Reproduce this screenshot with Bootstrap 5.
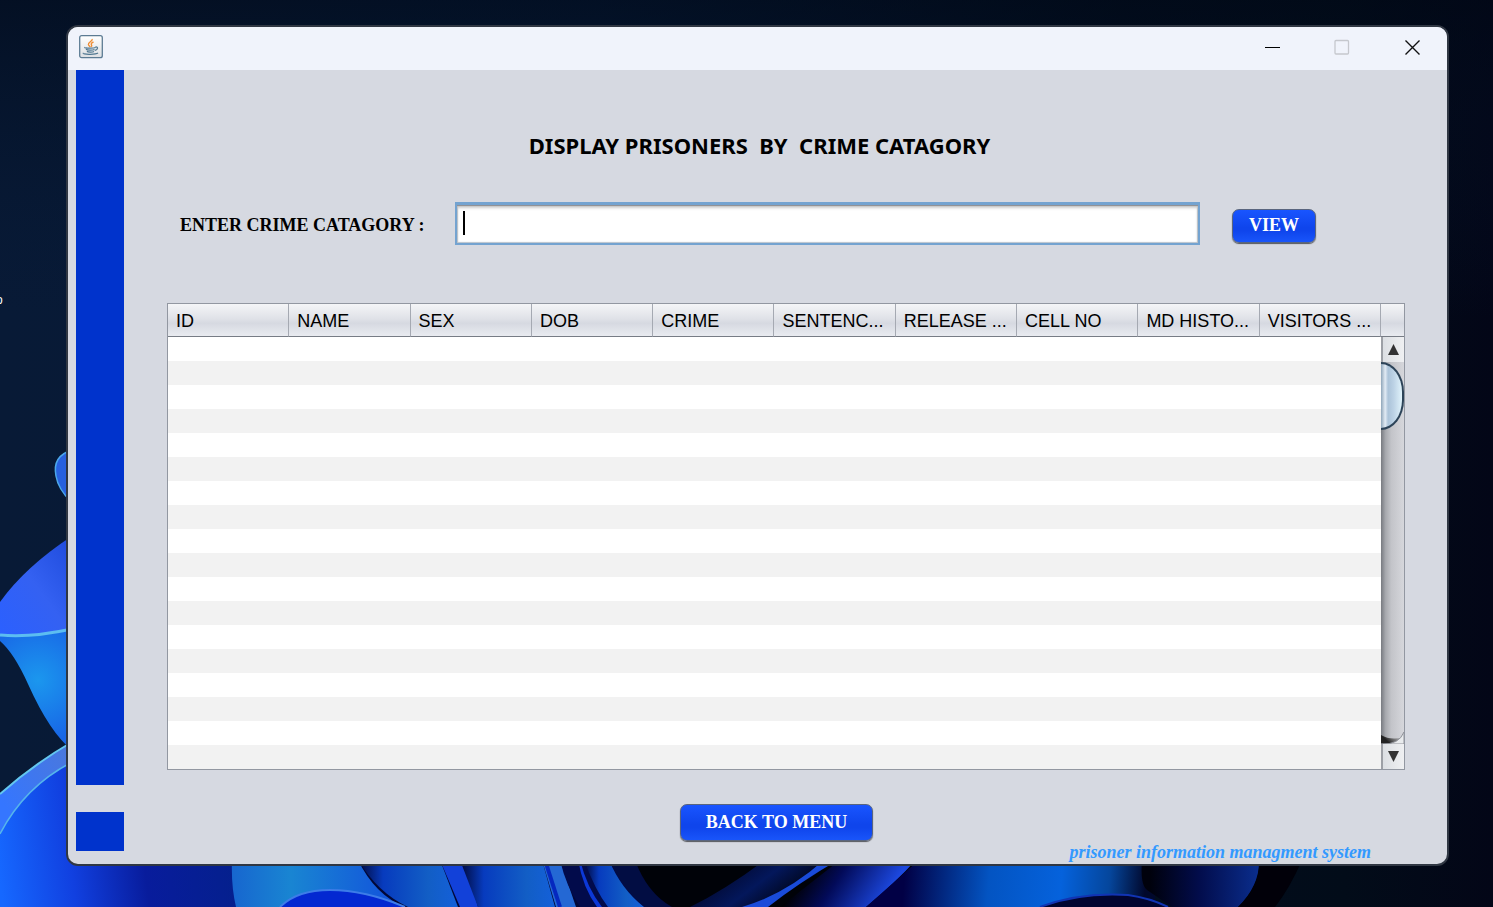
<!DOCTYPE html>
<html lang="en">
<head>
<meta charset="utf-8">
<meta name="viewport" content="width=device-width, initial-scale=1">
<title>Prisoner Information System</title>
<link href="https://cdn.jsdelivr.net/npm/bootstrap@5.3.0/dist/css/bootstrap.min.css" rel="stylesheet">
<style>
  body { background: #04101f; font-family: "Liberation Sans", Arial, sans-serif; }
  .desktop { padding: 25px 44px 41px 66px; }
  .wallpaper { z-index: 0; }
  .shortcut-text { left: -4px; top: 292px; font-size: 12px; line-height: 16px; }
  .app-window { z-index: 1; border: 2px solid #303743; border-radius: 12px; background: #d6d9e1; }
  .title-strip { height: 43px; background: #f0f3fb; padding-left: 11px; }
  .win-btn { width: 70px; height: 40px; padding: 0; border: 0; background: none; display: flex; align-items: center; justify-content: center; }
  .side { width: 56px; padding: 0 0 13px 8px; gap: 27px; }
  .side-bar { background: #0033cc; }
  .side-foot { height: 39px; }
  .main-area { padding: 60px 42px 0 43px; min-width: 0; }
  .page-title { font: bold 22px/30px "Noto Sans", sans-serif; white-space: pre-wrap; color: #000; padding-right: 53px; margin: 0 0 42px; text-align: center; }
  .search-row { padding: 0 89px 0 13px; margin-bottom: 58px; }
  .search-label { width: 275px; padding-top: 2px; font: bold 18px/24px "Liberation Serif", serif; color: #000; }
  .search-box { height: 43px; border: 2px solid #74a3d0; border-top-width: 3px; border-radius: 0; box-shadow: inset 0 1px 1px #8c8c90, inset 0 3px 3px #ccc, inset 0 0 1px 1px #b8c2cc; }
  .search-box:focus { border-color: #74a3d0; box-shadow: inset 0 1px 1px #8c8c90, inset 0 3px 3px #ccc; }
  .text-caret { left: 8px; top: 9px; width: 2px; height: 24px; background: #000; }
  .btn-royal { font: bold 18px/24px "Liberation Serif", serif; color: #fff; padding: 0 0 2px; border: 1px solid #59657f; border-radius: 7px; background: linear-gradient(#1955ff, #0f45ec 55%, #0f45ec 65%, #1955fa); box-shadow: 0 1px 1px #55575c; }
  .btn-royal:hover { color: #fff; background: #1955ff; }
  .btn-view { width: 84px; height: 34px; margin: 4px 0 0 32px; }
  .btn-menu { width: 193px; height: 37px; margin-bottom: 1px; }
  .grid-box { border: 1px solid #9297a1; background: #fff; }
  .head-fill, .grid-table th { height: 33px; border-bottom: 1px solid #777c85; background: linear-gradient(#f4f5f7, #e0e2e8 45%, #d6d9e1 60%, #e9ebf0); }
  .grid-table { table-layout: fixed; width: 100%; border-collapse: separate; border-spacing: 0; }
  .grid-table th { font-weight: 400; font-size: 18px; line-height: 24px; color: #000; padding: 1px 0 0 8px; border-right: 1px solid #a5a9b2; white-space: nowrap; overflow: hidden; }
  .grid-table td { height: 24px; padding: 0; }
  .grid-table tbody tr:nth-child(even) { background: #f2f2f2; }
  .scroll-col { width: 23px; }
  .scroll-track { background: linear-gradient(90deg, #777a80, #a7a9ae 20%, #c3c4c9 45%, #cfd0d5 80%, #d6d7dc); }
  .scroll-thumb { height: 68px; border: 2px solid #2c4358; border-left: 0; border-radius: 0 23px 23px 0 / 0 30px 30px 0; background: linear-gradient(90deg, #8ea5b9, #e2ebf4 20%, #abc3d9 34%, #bcd2e5 60%, #e0f3fb); }
  .arrow-btn { height: 25px; padding: 0; border: 0; border-left: 2px solid #9da0a6; background: linear-gradient(90deg, #dcdfe3, #eff0f2); line-height: 0; }
  .track-end { height: 12px; }
  .btn-line { margin-top: 34px; padding-right: 19px; }
  .system-name { font: italic bold 18px/20px "Liberation Serif", serif; color: #3399ff; padding-right: 34px; }
</style>
</head>
<body>
<div class="desktop position-relative min-vh-100 d-flex overflow-hidden">
  <svg class="wallpaper position-absolute top-0 start-0 w-100 h-100" viewBox="0 0 1493 907" preserveAspectRatio="xMidYMid slice" aria-hidden="true">
    <defs>
      <linearGradient id="night" x1="0" x2="1"><stop offset="0" stop-color="#081a36"/><stop offset=".4" stop-color="#051a38"/><stop offset=".75" stop-color="#020d1e"/><stop offset=".9" stop-color="#020c19"/><stop offset="1" stop-color="#030617"/></linearGradient>
      <linearGradient id="shade" x1="0" x2="0" y1="0" y2="1"><stop offset="0" stop-color="#010917" stop-opacity=".6"/><stop offset=".35" stop-color="#061733" stop-opacity="0"/></linearGradient>
      <linearGradient id="leafA" x1="0" x2="1" y1="1" y2="0"><stop offset="0" stop-color="#2b60ff"/><stop offset=".5" stop-color="#3461f2"/><stop offset="1" stop-color="#1e4adb"/></linearGradient>
      <radialGradient id="leafB" gradientUnits="userSpaceOnUse" cx="38" cy="680" r="62"><stop offset="0" stop-color="#1b97ee"/><stop offset="1" stop-color="#1866e6"/></radialGradient>
      <linearGradient id="leafC" gradientUnits="userSpaceOnUse" x1="0" y1="800" x2="68" y2="750"><stop offset="0" stop-color="#3576ff"/><stop offset="1" stop-color="#4a78dd"/></linearGradient>
      <linearGradient id="deep" gradientUnits="userSpaceOnUse" x1="0" y1="880" x2="240" y2="850"><stop offset="0" stop-color="#1668ff"/><stop offset=".3" stop-color="#1140e0"/><stop offset=".6" stop-color="#081c9c"/><stop offset="1" stop-color="#04208c"/></linearGradient>
      <linearGradient id="cyan" gradientUnits="userSpaceOnUse" x1="232" y1="0" x2="400" y2="0"><stop offset="0" stop-color="#1766cf"/><stop offset=".35" stop-color="#1985d2"/><stop offset="1" stop-color="#1250dc"/></linearGradient>
      <linearGradient id="fold" x1="0" x2="1"><stop offset="0" stop-color="#010838"/><stop offset=".25" stop-color="#073bbe"/><stop offset=".7" stop-color="#125ec5"/><stop offset="1" stop-color="#1460da"/></linearGradient>
      <linearGradient id="ribbon" gradientUnits="userSpaceOnUse" x1="740" y1="868" x2="775" y2="915"><stop offset="0" stop-color="#020c3a"/><stop offset=".4" stop-color="#03175b"/><stop offset="1" stop-color="#00020e"/></linearGradient>
      <linearGradient id="ribbon2" gradientUnits="userSpaceOnUse" x1="810" y1="860" x2="880" y2="905"><stop offset="0" stop-color="#000"/><stop offset=".4" stop-color="#020a58"/><stop offset="1" stop-color="#1c48df"/></linearGradient>
      <linearGradient id="bright" gradientUnits="userSpaceOnUse" x1="905" y1="870" x2="1145" y2="890"><stop offset="0" stop-color="#010045"/><stop offset=".35" stop-color="#0354c2"/><stop offset=".65" stop-color="#0562dc"/><stop offset=".85" stop-color="#05469c"/><stop offset="1" stop-color="#01082c"/></linearGradient>
      <linearGradient id="lobe" gradientUnits="userSpaceOnUse" x1="1150" y1="0" x2="1258" y2="0"><stop offset="0" stop-color="#00010c"/><stop offset=".45" stop-color="#020c4b"/><stop offset="1" stop-color="#0a2d8c"/></linearGradient>
    </defs>
    <rect width="1493" height="907" fill="url(#night)"/>
    <rect width="1493" height="907" fill="url(#shade)"/>
    <path d="M72 450Q52 456 56 476Q58 489 72 503Z" fill="#2861df"/>
    <path d="M72 450Q52 456 56 476Q58 489 72 503" fill="none" stroke="#4ba7ea" stroke-width="1.5"/>
    <path d="M0 602Q25 567 72 536V630Q30 637 0 635Z" fill="url(#leafA)"/>
    <path d="M0 636Q30 638 72 630V750Q50 733 28 684Q14 653 0 641Z" fill="url(#leafB)"/>
    <path d="M0 635Q30 638 72 629" fill="none" stroke="#5cbdf1" stroke-width="3"/>
    <path d="M0 794Q34 764 72 742V866H0Z" fill="url(#leafC)"/>
    <path d="M0 794Q34 764 72 742" fill="none" stroke="#63c7ef" stroke-width="2"/>
    <path d="M0 834Q24 787 72 762V860H240V907H0Z" fill="url(#deep)"/>
    <path d="M0 834Q24 787 72 762" fill="none" stroke="#56b5eb" stroke-width="1.5"/>
    <rect x="240" y="860" width="340" height="47" fill="#010838"/>
    <path d="M232 860Q231 886 236 907H405Q375 895 358 860Z" fill="url(#cyan)"/>
    <path d="M280 907Q297 890 330 890Q365 890 405 907Z" fill="#0328d1"/>
    <path d="M280 907Q297 890 330 890Q365 890 405 907" fill="none" stroke="#3d7ce8" stroke-width="2"/>
    <path d="M358 860Q378 893 408 907H458L440 860Z" fill="url(#fold)"/>
    <path d="M440 860L460 907H478Q473 887 460 860Z" fill="#1241d9"/>
    <path d="M460 860L478 907H555L542 860Z" fill="url(#fold)"/>
    <path d="M542 860L556 907H576L560 860Z" fill="#2468d4"/>
    <path d="M545 860L560 907" fill="none" stroke="#0528bf" stroke-width="4"/>
    <path d="M560 860Q566 886 580 907H700V860Z" fill="#020b4b"/>
    <path d="M580 860Q587 888 602 907H597Q583 888 578 860Z" fill="#0c38d7"/>
    <path d="M584 860Q595 890 608 907H644Q621 889 609 860Z" fill="url(#fold)"/>
    <path d="M609 860Q625 892 645 907H672Q646 887 635 860Z" fill="#020d43"/>
    <path d="M635 860Q647 893 672 907H985V860Z" fill="#000208"/>
    <path d="M690 907Q725 890 765 860H834Q800 890 745 907Z" fill="url(#ribbon)"/>
    <path d="M742 907H768Q800 882 838 860H824Q786 894 742 907Z" fill="#194bda"/>
    <path d="M780 907L840 860H916Q895 883 866 907Z" fill="url(#ribbon2)"/>
    <path d="M866 907L919 860H1155V907Z" fill="url(#bright)"/>
    <path d="M1142 860Q1140 885 1147 890L1172 907H1238Q1261 885 1259 860Z" fill="url(#lobe)"/>
    <path d="M1040 907Q1080 892 1128 895Q1150 898 1168 907Z" fill="#010530"/>
    <path d="M1040 907Q1080 892 1128 895Q1150 898 1168 907" fill="none" stroke="#1134b3" stroke-width="2"/>
    <path d="M1259 860Q1260 885 1238 907H1275Q1290 888 1302 860Z" fill="#010009"/>
  </svg>
  <span class="shortcut-text position-absolute text-white">o</span>

  <div class="app-window position-relative flex-grow-1 d-flex flex-column overflow-hidden">
    <header class="title-strip d-flex align-items-start justify-content-between">
      <svg class="mt-2" width="24" height="24" viewBox="0 0 24 24" role="img" aria-label="Java">
        <defs><linearGradient id="tile" x2="0" y2="1"><stop stop-color="#fff"/><stop offset="1" stop-color="#dcdfe2"/></linearGradient></defs>
        <rect x=".7" y=".7" width="22.6" height="22" rx="2" fill="url(#tile)" stroke="#5c7b93" stroke-width="1.3"/>
        <path d="M13.200 4c.6 2.200-4.200 3.300-3.800 5.500.1 1 1.200 1.500 1.800 2.400M14.500 7c-2 .8-2.800 1.800-2 2.800.5.8.2 1.500-.4 2" fill="none" stroke="#ee8d34" stroke-width="1.400"/>
        <path d="M6 12.300c-1.500 1 9 1.100 10.500.2M7 14.200c1 1.300 7 1.200 8.500.3M8 16.300c1 1.100 5.500 1.100 7 .2M16.500 12c3-.6 2.500 2.800-.6 3.400M4.500 18c-2 1.500 12 2 14.500.1" fill="none" stroke="#517891" stroke-width="1.300"/>
      </svg>
      <div class="d-flex">
        <button class="win-btn" type="button" aria-label="Minimize"><svg width="16" height="16"><path d="M1 8.500h15" stroke="#000"/></svg></button>
        <button class="win-btn" type="button" aria-label="Maximize" disabled><svg width="16" height="16"><rect x="1" y="1.500" width="13.500" height="13.500" rx="1" fill="none" stroke="#c5c7cd" stroke-width="1.300"/></svg></button>
        <button class="win-btn" type="button" aria-label="Close"><svg width="16" height="16"><path d="M1.500 1.500l14 14M15.500 1.500l-14 14" stroke="#111" stroke-width="1.400"/></svg></button>
      </div>
    </header>

    <div class="d-flex flex-grow-1">
      <div class="side d-flex flex-column flex-shrink-0">
        <div class="side-bar flex-grow-1"></div>
        <div class="side-bar side-foot"></div>
      </div>
      <main class="main-area flex-grow-1">
        <h1 class="page-title">DISPLAY PRISONERS  BY  CRIME CATAGORY</h1>
        <form class="search-row d-flex align-items-center">
          <label class="search-label flex-shrink-0" for="crime">ENTER CRIME CATAGORY :</label>
          <div class="position-relative flex-grow-1">
            <input class="search-box form-control" id="crime" type="text">
            <span class="text-caret position-absolute"></span>
          </div>
          <button class="btn btn-royal btn-view flex-shrink-0" type="button">VIEW</button>
        </form>

        <div class="grid-box d-flex">
          <table class="grid-table">
            <thead>
              <tr><th>ID</th><th>NAME</th><th>SEX</th><th>DOB</th><th>CRIME</th><th>SENTENC...</th><th>RELEASE ...</th><th>CELL NO</th><th>MD HISTO...</th><th>VISITORS ...</th></tr>
            </thead>
            <tbody>
              <tr><td colspan="10"></td></tr><tr><td colspan="10"></td></tr><tr><td colspan="10"></td></tr>
              <tr><td colspan="10"></td></tr><tr><td colspan="10"></td></tr><tr><td colspan="10"></td></tr>
              <tr><td colspan="10"></td></tr><tr><td colspan="10"></td></tr><tr><td colspan="10"></td></tr>
              <tr><td colspan="10"></td></tr><tr><td colspan="10"></td></tr><tr><td colspan="10"></td></tr>
              <tr><td colspan="10"></td></tr><tr><td colspan="10"></td></tr><tr><td colspan="10"></td></tr>
              <tr><td colspan="10"></td></tr><tr><td colspan="10"></td></tr><tr><td colspan="10"></td></tr>
            </tbody>
          </table>
          <div class="scroll-col d-flex flex-column flex-shrink-0">
            <div class="head-fill"></div>
            <button class="arrow-btn" type="button" aria-label="Scroll up"><svg width="12" height="12"><path d="M0 11L5.500 0L11 11Z" fill="#333"/></svg></button>
            <div class="scroll-track flex-grow-1 d-flex flex-column justify-content-between">
              <div class="scroll-thumb"></div>
              <svg class="track-end w-100" viewBox="0 0 23 12" preserveAspectRatio="none" aria-hidden="true">
                <defs><linearGradient id="dusk" x2="1" y2="-.4"><stop stop-color="#222"/><stop offset=".8" stop-color="#999" stop-opacity=".3"/></linearGradient></defs>
                <path d="M0 3Q10 9 23 5V12H0Z" fill="url(#dusk)"/>
                <path d="M0 12Q18 13 23 0V12Z" fill="#e9ebed" stroke="#90939a"/>
              </svg>
            </div>
            <button class="arrow-btn" type="button" aria-label="Scroll down"><svg width="12" height="12"><path d="M0 0H11L5.500 11Z" fill="#333"/></svg></button>
          </div>
        </div>

        <div class="btn-line text-center"><button class="btn btn-royal btn-menu" type="button">BACK TO MENU</button></div>
        <div class="system-name text-end">prisoner information managment system</div>
      </main>
    </div>
  </div>
</div>
<script src="https://cdn.jsdelivr.net/npm/bootstrap@5.3.0/dist/js/bootstrap.bundle.min.js"></script>
</body>
</html>
